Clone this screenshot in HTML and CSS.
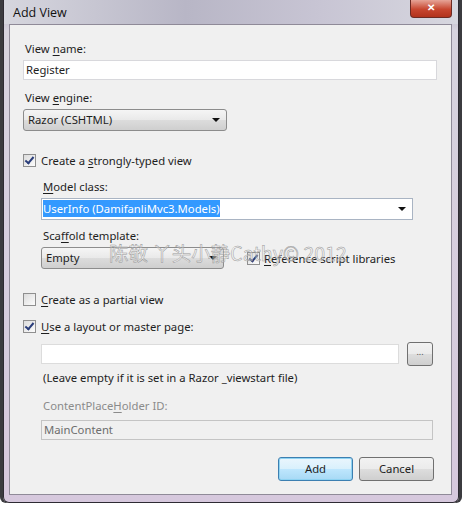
FILE: index.html
```html
<!DOCTYPE html>
<html lang="en">
<head>
    <meta charset="UTF-8">
    <title>Add View</title>
    <link rel="stylesheet" href="styles.css">
</head>
<body>
    <div class="window">
        <div class="titlebar">
            <span class="title">Add View</span>
            <span class="close">&#x2715;</span>
        </div>
        <div class="client">
            <div class="label">View <u>n</u>ame:</div>
            <div class="field name-field">Register</div>

            <div class="label">View <u>e</u>ngine:</div>
            <div class="select engine">Razor (CSHTML)<span class="arrow"></span></div>

            <div class="check-row typed">
                <span class="box checked"></span><span>Create a <u>s</u>trongly-typed view</span>
            </div>

            <div class="indent">
                <div class="label"><u>M</u>odel class:</div>
                <div class="field combo"><span class="sel">UserInfo (DamifanliMvc3.Models)</span><span class="arrow"></span></div>

                <div class="label">Sca<u>f</u>fold template:</div>
                <div class="scaffold-row">
                    <div class="select scaffold">Empty<span class="arrow"></span></div>
                    <div class="check-row small">
                        <span class="box checked"></span><span><u>R</u>eference script libraries</span>
                    </div>
                </div>
                <div class="watermark">陈敬 丫头小静Cathy© 2012</div>
            </div>

            <div class="check-row partial">
                <span class="box"></span><span><u>C</u>reate as a partial view</span>
            </div>
            <div class="check-row layout">
                <span class="box checked"></span><span><u>U</u>se a layout or master page:</span>
            </div>

            <div class="indent">
                <div class="browse-row">
                    <div class="field browse-field"></div>
                    <div class="btn dots">...</div>
                </div>
                <div class="hint">(Leave empty if it is set in a Razor _viewstart file)</div>
                <div class="label muted">ContentPlace<u>H</u>older ID:</div>
                <div class="field disabled">MainContent</div>
            </div>

            <div class="buttons">
                <div class="btn primary">Add</div>
                <div class="btn">Cancel</div>
            </div>
        </div>
    </div>
</body>
</html>
```

FILE: styles.css
```css
body {
    margin: 0;
    background: #fff;
    font-family: "Noto Sans", "Open Sans", sans-serif;
    font-size: 11.3px;
    color: #1e1e1e;
}
u {
    text-decoration: underline;
    text-underline-offset: 2px;
}
.window {
    width: 456px;
    height: 503px;
    margin-left: 3px;
    box-sizing: border-box;
    border: 1px solid #2e2b33;
    border-top: none;
    border-radius: 0 0 6px 6px;
    background: linear-gradient(#a9a5b4 0, #d7d3de 30px, #d6c8dd 100%);
    padding: 0 6px 8px 5px;
    box-shadow: -3px 0 0 #3b3b3f, 3px 0 0 #3b3b3f;
}
.titlebar {
    height: 24px;
    position: relative;
    background: linear-gradient(90deg, #d6d6de 0, #b8b6c6 40%, #c8c5d4 70%, #d7d7df 100%);
    margin: 0 -6px 0 -5px;
    padding-left: 9px;
}
.title {
    font-family: "Open Sans", sans-serif;
    font-size: 12.5px;
    line-height: 25px;
    color: #111;
}
.close {
    position: absolute;
    right: 6px;
    top: 0;
    width: 40px;
    height: 17px;
    background: linear-gradient(#e6a497, #c7462f 55%, #b2321c);
    border: 1px solid #6d2a22;
    border-top: none;
    border-radius: 0 0 4px 4px;
    color: #fff;
    font-size: 10px;
    font-weight: bold;
    text-align: center;
    line-height: 15px;
}
.client {
    height: 471px;
    box-sizing: border-box;
    background: #f0f0f0;
    border: 1px solid #8f8a98;
    padding: 13px 14px 0 13px;
}
.label {
    height: 22px;
    line-height: 22px;
    padding-left: 2px;
}
.label.muted {
    color: #8b8b8b;
}
.field {
    height: 20px;
    box-sizing: border-box;
    background: #fff;
    border: 1px solid #d8d8dc;
    line-height: 18px;
    padding-left: 2px;
    position: relative;
}
.name-field {
    margin-bottom: 7px;
}
.arrow {
    position: absolute;
    right: 6px;
    top: 8px;
    border-left: 4px solid transparent;
    border-right: 4px solid transparent;
    border-top: 4px solid #111;
}
.select {
    position: relative;
    height: 22px;
    box-sizing: border-box;
    border: 1px solid #8c8c8c;
    border-radius: 3px;
    background: linear-gradient(#f5f5f5, #e9e9e9 50%, #dcdcdc 51%, #cfcfcf);
    line-height: 20px;
    padding-left: 4px;
}
.engine {
    width: 204px;
}
.check-row {
    display: flex;
    align-items: center;
    height: 20px;
}
.box {
    width: 11px;
    height: 11px;
    border: 1px solid #8f8f8f;
    background: linear-gradient(135deg, #dcdcdc, #fcfcfc);
    margin-right: 5px;
    position: relative;
    flex: none;
}
.box.checked::after {
    content: "";
    position: absolute;
    left: 3px;
    top: 0;
    width: 3px;
    height: 7px;
    border: solid #2a3d7a;
    border-width: 0 2px 2px 0;
    transform: rotate(40deg);
}
.typed {
    margin-top: 19px;
}
.indent {
    padding-left: 18px;
    position: relative;
}
.typed + .indent {
    margin-top: 6px;
}
.combo {
    width: 372px;
    border-color: #a9b4c3;
    height: 22px;
    line-height: 20px;
    margin-bottom: 5px;
}
.sel {
    background: #3399ff;
    color: #fff;
    padding: 1px 0;
    margin-left: -1px;
}
.scaffold-row {
    display: flex;
    align-items: center;
    gap: 23px;
}
.scaffold {
    width: 183px;
}
.check-row.small .box {
    margin-right: 4px;
}
.watermark {
    position: absolute;
    left: 86px;
    top: 62px;
    font-size: 19.5px;
    color: rgba(255, 255, 255, 0.35);
    -webkit-text-stroke: 0.5px #999;
    font-family: "Noto Sans CJK SC", "Noto Sans", sans-serif;
    white-space: nowrap;
}
.partial {
    margin-top: 20px;
}
.layout {
    margin-top: 7px;
}
.layout + .indent {
    margin-top: 6px;
}
.browse-row {
    display: flex;
    align-items: center;
    gap: 8px;
}
.browse-field {
    width: 358px;
    border-color: #dcdcdc;
}
.btn {
    box-sizing: border-box;
    border: 1px solid #707070;
    border-radius: 3px;
    background: linear-gradient(#f2f2f2, #ebebeb 50%, #dddddd 51%, #cfcfcf);
    text-align: center;
}
.dots {
    width: 26px;
    height: 24px;
    line-height: 18px;
    font-size: 9px;
    color: #555;
}
.hint {
    height: 28px;
    line-height: 22px;
    padding-left: 2px;
    margin-top: 1px;
}
.hint + .label {
    margin-bottom: 3px;
}
.disabled {
    width: 392px;
    background: #f0f0f0;
    border-color: #c4c4c4;
    color: #6d6d6d;
}
.buttons {
    display: flex;
    justify-content: flex-end;
    gap: 6px;
    margin-top: 17px;
    padding-right: 3px;
}
.buttons .btn {
    width: 75px;
    height: 24px;
    line-height: 22px;
}
.btn.primary {
    border-color: #3c7fb1;
    box-shadow: inset 0 0 0 1px #8fd3f2;
    background: linear-gradient(#eaf6fd, #d9f0fc 50%, #bee6fd 51%, #a7d9f5);
}
```
